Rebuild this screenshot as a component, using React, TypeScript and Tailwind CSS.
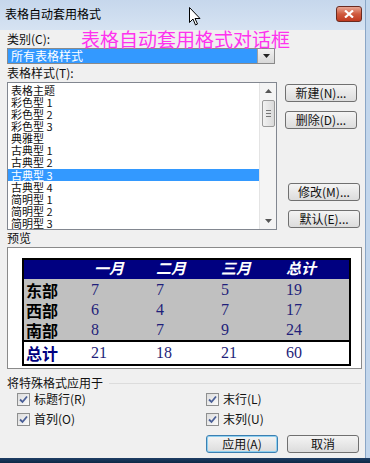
import React from 'react';

const ui = { fontFamily: '"Noto Sans CJK SC", "Noto Sans", sans-serif' };
const serif = { fontFamily: '"Liberation Serif", "Noto Sans CJK SC", serif' };

const styles = ['表格主题', '彩色型 1', '彩色型 2', '彩色型 3', '典雅型', '古典型 1', '古典型 2', '古典型 3', '古典型 4', '简明型 1', '简明型 2', '简明型 3'];

const rows = [
  ['东部', '7', '7', '5', '19'],
  ['西部', '6', '4', '7', '17'],
  ['南部', '8', '7', '9', '24'],
];

function Btn({ label, focus, className = '' }: { label: string; focus?: boolean; className?: string }) {
  return (
    <div
      className={`h-[18px] w-[72px] rounded-[3px] border flex items-center justify-center text-[12px] text-[#111] bg-gradient-to-b from-[#f4f4f4] to-[#dcdcdc] ${focus ? 'border-[#3c7fb1] shadow-[inset_0_0_0_1px_#8fd0f0]' : 'border-[#707070]'} ${className}`}
    >
      {label}
    </div>
  );
}

function Check({ label }: { label: string }) {
  return (
    <div className="flex items-center gap-[4px] h-[14px]">
      <div className="w-[13px] h-[13px] border border-[#8e8f8f] bg-gradient-to-br from-[#dcdcdc] to-[#fbfbfb] flex items-center justify-center">
        <svg width="9" height="9" viewBox="0 0 9 9">
          <path d="M1 4.5 L3.5 7 L8 1.5" fill="none" stroke="#4a5f97" strokeWidth="1.8" />
        </svg>
      </div>
      <span className="text-[12px] text-[#111]">{label}</span>
    </div>
  );
}

export default function App() {
  return (
    <div className="w-[370px] h-[463px] relative overflow-hidden bg-[#f0f0f0]" style={ui}>
      <div className="flex h-[458px]">
        <div className="w-[365px] flex flex-col">
          {/* title bar */}
          <div className="h-[30px] bg-gradient-to-b from-[#c6d7ec] to-[#d6e3f2] flex items-center justify-between pl-[5px] pr-[3px]">
            <span className="text-[12px] text-black -mt-[2px]">表格自动套用格式</span>
            <div className="w-[26px] h-[16px] -mt-[3px] rounded-[3px] border border-[#6b2b20] bg-gradient-to-b from-[#e8a593] via-[#cf5a3e] to-[#c0391f] flex items-center justify-center">
              <svg width="10" height="8" viewBox="0 0 10 8">
                <path d="M1 0.5 L9 7.5 M9 0.5 L1 7.5" stroke="white" strokeWidth="2.2" />
              </svg>
            </div>
          </div>

          <div className="flex-1 flex flex-col pl-[7px]">
            <div className="text-[12px] leading-[14px] mt-[2px] text-[#111]">类别(C):</div>
            <div className="mt-[2px] flex h-[16px] w-[268px] border border-[#8a8a8a] bg-white">
              <div className="flex-1 bg-[#3399ff] text-white text-[12px] leading-[14px] pl-[3px]">所有表格样式</div>
              <div className="w-[17px] bg-gradient-to-b from-[#f2f2f2] to-[#d8d8d8] border-l border-[#a0a0a0] flex items-center justify-center">
                <svg width="7" height="4" viewBox="0 0 7 4"><path d="M0 0 H7 L3.5 4 Z" fill="#222" /></svg>
              </div>
            </div>
            <div className="text-[12px] leading-[14px] mt-[2px] text-[#111]">表格样式(T):</div>

            <div className="flex mt-[2px]">
              <div className="w-[270px] h-[148px] border border-[#828790] bg-white flex">
                <div className="flex-1 flex flex-col pt-[1px]">
                  {styles.map((s, i) => (
                    <div
                      key={s}
                      className={`h-[12.2px] leading-[12px] text-[11px] pl-[3px] overflow-hidden ${i === 7 ? 'bg-[#3399ff] text-white' : 'text-[#111]'}`}
                    >
                      {s}
                    </div>
                  ))}
                </div>
                <div className="w-[17px] bg-[#f4f4f4] border-l border-[#e4e4e4] flex flex-col items-center">
                  <svg className="mt-[6px]" width="7" height="4" viewBox="0 0 7 4"><path d="M3.5 0 L7 4 H0 Z" fill="#555" /></svg>
                  <div className="mt-[7px] w-[13px] h-[27px] rounded-[2px] border border-[#9a9a9a] bg-gradient-to-r from-[#f2f2f2] to-[#dadada] flex flex-col items-center justify-center gap-[2px]">
                    <div className="w-[5px] h-px bg-[#777]" />
                    <div className="w-[5px] h-px bg-[#777]" />
                    <div className="w-[5px] h-px bg-[#777]" />
                  </div>
                  <div className="flex-1" />
                  <svg className="mb-[6px]" width="7" height="4" viewBox="0 0 7 4"><path d="M0 0 H7 L3.5 4 Z" fill="#555" /></svg>
                </div>
              </div>
              <div className="flex flex-col pl-[8px] pt-[2px]">
                <Btn label="新建(N)..." />
                <Btn label="删除(D)..." className="mt-[9px]" />
                <Btn label="修改(M)..." className="mt-[54px] ml-[3px]" />
                <Btn label="默认(E)..." className="mt-[9px] ml-[3px]" />
              </div>
            </div>

            <div className="text-[12px] leading-[14px] mt-[1px] text-[#111]">预览</div>
            <div className="mt-[2px] w-[355px] h-[122px] border border-[#8a8a8a] bg-white pt-[10px] pl-[14px]">
              <div className="w-[329px] h-[108px] border-2 border-black flex flex-col" style={serif}>
                <div className="h-[19px] bg-[#000080] grid grid-cols-[67px_65px_65px_65px_1fr] items-center text-white font-bold italic text-[15px] leading-none">
                  <div />
                  <div className="pl-[3px]">一月</div>
                  <div>二月</div>
                  <div>三月</div>
                  <div>总计</div>
                </div>
                <div className="flex-1 bg-[#c0c0c0] flex flex-col pt-[1px]">
                  {rows.map(r => (
                    <div key={r[0]} className="h-[20px] grid grid-cols-[67px_65px_65px_65px_1fr] items-center text-[16px] leading-none">
                      <div className="pl-[2px] font-bold text-black" style={ui}>{r[0]}</div>
                      {r.slice(1).map((v, j) => (
                        <div key={j} className="text-[#1f1f7a]">{v}</div>
                      ))}
                    </div>
                  ))}
                </div>
                <div className="h-[2px] bg-black" />
                <div className="h-[22px] bg-white grid grid-cols-[67px_65px_65px_65px_1fr] items-center text-[16px] leading-none">
                  <div className="pl-[2px] font-bold text-[#000080]" style={ui}>总计</div>
                  <div className="text-[#1f1f7a]">21</div>
                  <div className="text-[#1f1f7a]">18</div>
                  <div className="text-[#1f1f7a]">21</div>
                  <div className="text-[#1f1f7a]">60</div>
                </div>
              </div>
            </div>

            <div className="flex items-center mt-[7px] h-[14px]">
              <span className="text-[12px] text-[#111]">将特殊格式应用于</span>
              <div className="flex-1 h-px bg-[#dcdcdc] ml-[6px] mr-[4px]" />
            </div>
            <div className="grid grid-cols-[189px_1fr] pl-[10px] mt-[2px] gap-y-[6px]">
              <Check label="标题行(R)" />
              <Check label="末行(L)" />
              <Check label="首列(O)" />
              <Check label="末列(U)" />
            </div>
            <div className="flex justify-end gap-[9px] pr-[6px] mt-[9px]">
              <Btn label="应用(A)" focus />
              <Btn label="取消" />
            </div>
          </div>
        </div>
        <div className="w-[5px] bg-[#c2d6ec] border-l border-[#8aa6c6]" />
      </div>
      <div className="h-[5px] bg-gradient-to-b from-[#1f3f66] to-[#0d2744]" />

      {/* annotation overlay */}
      <div className="absolute left-[81px] top-[29px] text-[19px] leading-[20px] text-[#ff33ee]">表格自动套用格式对话框</div>
      {/* mouse pointer */}
      <svg className="absolute left-[189px] top-[7px]" width="12" height="19" viewBox="0 0 12 19">
        <path d="M0.5 0.5 V15.5 L4 12 L6.5 18 L8.5 17 L6 11.5 H11 Z" fill="white" stroke="black" strokeWidth="1" />
      </svg>
    </div>
  );
}
